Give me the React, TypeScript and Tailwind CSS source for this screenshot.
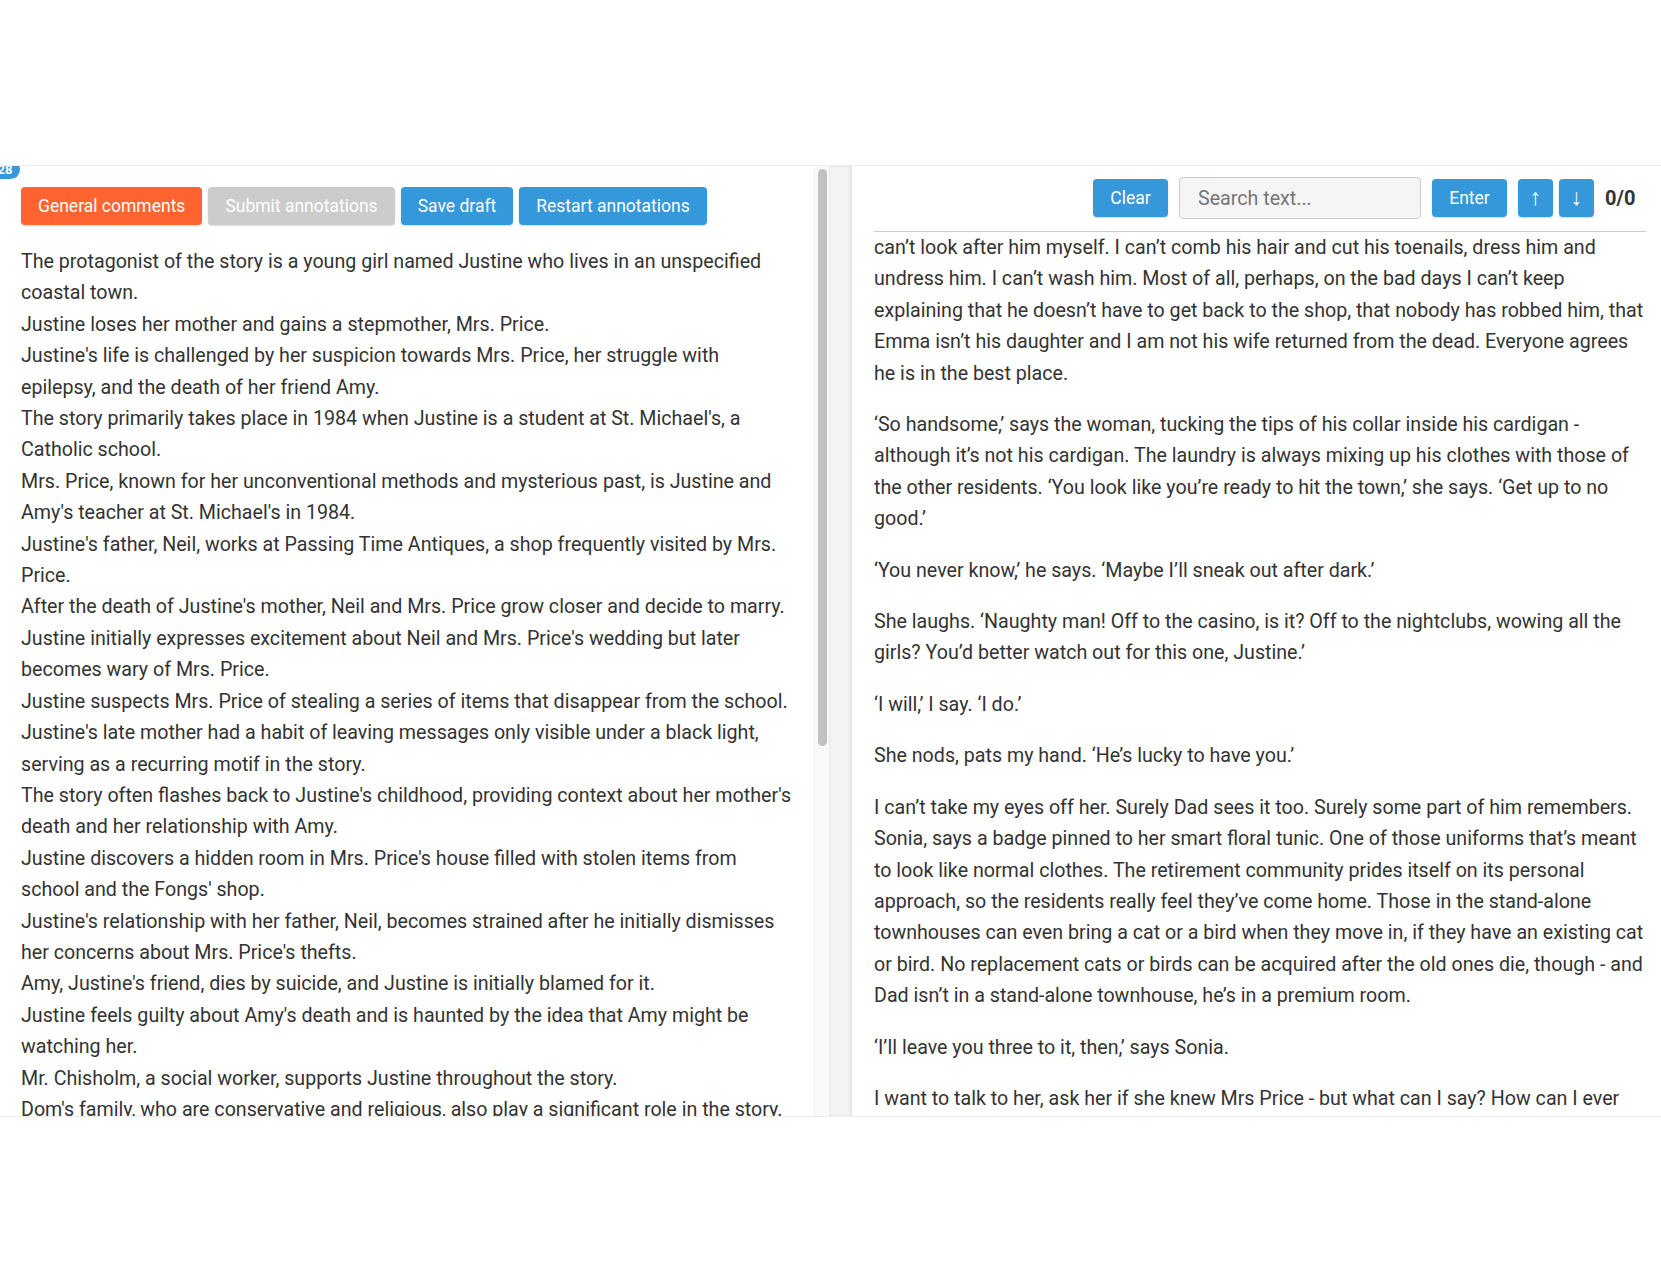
import * as React from 'react';

const summary = [
  'The protagonist of the story is a young girl named Justine who lives in an unspecified coastal town.',
  'Justine loses her mother and gains a stepmother, Mrs. Price.',
  "Justine's life is challenged by her suspicion towards Mrs. Price, her struggle with epilepsy, and the death of her friend Amy.",
  "The story primarily takes place in 1984 when Justine is a student at St. Michael's, a Catholic school.",
  "Mrs. Price, known for her unconventional methods and mysterious past, is Justine and Amy's teacher at St. Michael's in 1984.",
  "Justine's father, Neil, works at Passing Time Antiques, a shop frequently visited by Mrs. Price.",
  "After the death of Justine's mother, Neil and Mrs. Price grow closer and decide to marry.",
  "Justine initially expresses excitement about Neil and Mrs. Price's wedding but later becomes wary of Mrs. Price.",
  'Justine suspects Mrs. Price of stealing a series of items that disappear from the school.',
  "Justine's late mother had a habit of leaving messages only visible under a black light, serving as a recurring motif in the story.",
  "The story often flashes back to Justine's childhood, providing context about her mother's death and her relationship with Amy.",
  "Justine discovers a hidden room in Mrs. Price's house filled with stolen items from school and the Fongs' shop.",
  "Justine's relationship with her father, Neil, becomes strained after he initially dismisses her concerns about Mrs. Price's thefts.",
  "Amy, Justine's friend, dies by suicide, and Justine is initially blamed for it.",
  "Justine feels guilty about Amy's death and is haunted by the idea that Amy might be watching her.",
  'Mr. Chisholm, a social worker, supports Justine throughout the story.',
  "Dom's family, who are conservative and religious, also play a significant role in the story.",
];

const story = [
  'can\u2019t look after him myself. I can\u2019t comb his hair and cut his toenails, dress him and undress him. I can\u2019t wash him. Most of all, perhaps, on the bad days I can\u2019t keep explaining that he doesn\u2019t have to get back to the shop, that nobody has robbed him, that Emma isn\u2019t his daughter and I am not his wife returned from the dead. Everyone agrees he is in the best place.',
  '\u2018So handsome,\u2019 says the woman, tucking the tips of his collar inside his cardigan - although it\u2019s not his cardigan. The laundry is always mixing up his clothes with those of the other residents. \u2018You look like you\u2019re ready to hit the town,\u2019 she says. \u2018Get up to no good.\u2019',
  '\u2018You never know,\u2019 he says. \u2018Maybe I\u2019ll sneak out after dark.\u2019',
  'She laughs. \u2018Naughty man! Off to the casino, is it? Off to the nightclubs, wowing all the girls? You\u2019d better watch out for this one, Justine.\u2019',
  '\u2018I will,\u2019 I say. \u2018I do.\u2019',
  'She nods, pats my hand. \u2018He\u2019s lucky to have you.\u2019',
  'I can\u2019t take my eyes off her. Surely Dad sees it too. Surely some part of him remembers. Sonia, says a badge pinned to her smart floral tunic. One of those uniforms that\u2019s meant to look like normal clothes. The retirement community prides itself on its personal approach, so the residents really feel they\u2019ve come home. Those in the stand-alone townhouses can even bring a cat or a bird when they move in, if they have an existing cat or bird. No replacement cats or birds can be acquired after the old ones die, though - and Dad isn\u2019t in a stand-alone townhouse, he\u2019s in a premium room.',
  '\u2018I\u2019ll leave you three to it, then,\u2019 says Sonia.',
  'I want to talk to her, ask her if she knew Mrs Price - but what can I say? How can I ever explain what I know about her, about the woman who came before?',
];

const btn = 'h-[38px] px-[17px] rounded-[4px] text-white text-[17.5px] shadow-[0_1px_2px_rgba(0,0,0,0.15)] flex items-center';

export default function App() {
  return (
    <div className="w-full h-[1283px] bg-white pt-[165px] font-['Roboto',sans-serif] text-[#333]">
      <div className="relative flex h-[952px] border-y border-[#eeeeee] overflow-hidden">
        <div className="absolute left-[-10px] top-[-6px] h-[19px] w-[30px] rounded-full bg-[#3498db] text-white text-[13px] font-bold leading-[19px] text-center">
          28
        </div>

        <div className="w-[814px] flex flex-col pl-[21px] pr-[20px] pt-[21px] overflow-hidden">
          <div className="flex gap-[6px]">
            <button className={`${btn} bg-[#ff6430]`}>General comments</button>
            <button className={`${btn} bg-[#cccccc]`}>Submit annotations</button>
            <button className={`${btn} bg-[#3498db]`}>Save draft</button>
            <button className={`${btn} bg-[#3498db]`}>Restart annotations</button>
          </div>
          <div className="mt-[21px] text-[19.65px] leading-[31.4px]">
            {summary.map((s) => (
              <p key={s}>{s}</p>
            ))}
          </div>
        </div>

        <div className="w-[15px] bg-[#f9f9f9] border-l border-[#f0f0f0] pt-[3px] flex justify-center">
          <div className="w-[9px] h-[577px] rounded-full bg-[#c1c1c1]" />
        </div>

        <div className="w-[23px] bg-[#f3f3f3] shadow-[inset_1px_0_2px_rgba(0,0,0,0.04),inset_-2px_0_3px_rgba(0,0,0,0.06)]" />

        <div className="flex-1 flex flex-col pl-[22px] pr-[15px] pt-[11px] overflow-hidden">
          <div className="flex items-center justify-end gap-[11px] pb-[12px] border-b border-[#cccccc]">
            <button className={`${btn} bg-[#3498db] w-[75px] px-0 justify-center`}>Clear</button>
            <input
              className="w-[242px] h-[42px] rounded-[4px] border border-[#cccccc] bg-[#f5f5f5] px-[18px] text-[19.65px] placeholder:text-[#757575] outline-none"
              placeholder="Search text..."
            />
            <button className={`${btn} bg-[#3498db] w-[75px] px-0 justify-center`}>Enter</button>
            <div className="flex gap-[6px]">
              <button className={`${btn} bg-[#3498db] w-[35px] px-0 justify-center text-[23px]`}>↑</button>
              <button className={`${btn} bg-[#3498db] w-[35px] px-0 justify-center text-[23px]`}>↓</button>
            </div>
            <span className="w-[29px] text-[20px] font-bold mr-[12px] whitespace-nowrap">0/0</span>
          </div>
          <div className="text-[19.65px] leading-[31.4px] flex flex-col gap-[20px]">
            {story.map((s) => (
              <p key={s}>{s}</p>
            ))}
          </div>
        </div>
      </div>
    </div>
  );
}
